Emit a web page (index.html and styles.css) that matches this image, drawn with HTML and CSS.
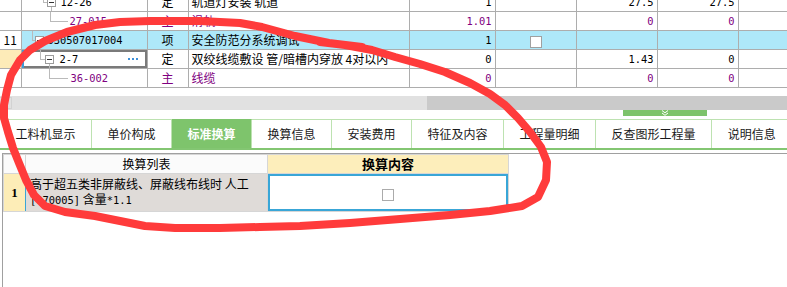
FILE: index.html
```html
<!DOCTYPE html>
<html lang="zh">
<head>
  <meta charset="UTF-8">
  <title>标准换算</title>
  <link rel="stylesheet" href="styles.css">
</head>
<body>

  <div class="grid">
    <table class="main">
      <colgroup>
        <col class="w-no"><col class="w-code"><col class="w-type"><col class="w-name"><col class="w-qty"><col class="w-chk"><col class="w-n"><col class="w-n"><col class="w-n">
      </colgroup>
      <tbody>
        <tr>
          <td class="no"></td>
          <td class="code"><div class="tree"><span class="sp sp21"></span><span class="elbow el4"></span><span class="node down"><i class="box"></i></span><span class="mono tx5">12-26</span></div></td>
          <td class="type">定</td>
          <td class="name">轨道灯安装 轨道</td>
          <td class="num">1</td>
          <td></td>
          <td class="num">27.5</td>
          <td class="num">27.5</td>
          <td></td>
        </tr>
        <tr class="sub-item">
          <td class="no"></td>
          <td class="code"><div class="tree"><span class="sp sp28"></span><span class="elbow el18"></span><span class="mono tx2">27-015</span></div></td>
          <td class="type">主</td>
          <td class="name">滑轨</td>
          <td class="num">1.01</td>
          <td></td>
          <td class="num">0</td>
          <td class="num">0</td>
          <td></td>
        </tr>
        <tr class="picked">
          <td class="no">11</td>
          <td class="code"><div class="tree"><span class="sp sp10"></span><span class="elbow el3"></span><span class="node down"><i class="box"></i></span><span class="mono tx4">030507017004</span></div></td>
          <td class="type">项</td>
          <td class="name">安全防范分系统调试</td>
          <td class="num">1</td>
          <td class="center"><span class="chk"></span></td>
          <td></td>
          <td></td>
          <td></td>
        </tr>
        <tr>
          <td class="no current"></td>
          <td class="code focus"><div class="tree"><span class="sp sp18"></span><span class="elbow el5"></span><span class="node down"><i class="box"></i></span><span class="mono tx6">2-7</span>
            <svg class="more" width="10" height="3" viewBox="0 0 10 3"><rect x="0" y="0" width="2" height="2"/><rect x="4" y="0" width="2" height="2"/><rect x="8" y="0" width="2" height="2"/></svg></div></td>
          <td class="type">定</td>
          <td class="name">双绞线缆敷设 管/暗槽内穿放 4对以内</td>
          <td class="num">0</td>
          <td></td>
          <td class="num">1.43</td>
          <td class="num">0</td>
          <td></td>
        </tr>
        <tr class="sub-item">
          <td class="no"></td>
          <td class="code"><div class="tree"><span class="sp sp27"></span><span class="elbow el19"></span><span class="mono tx3">36-002</span></div></td>
          <td class="type">主</td>
          <td class="name">线缆</td>
          <td class="num">0</td>
          <td></td>
          <td class="num">0</td>
          <td class="num">0</td>
          <td></td>
        </tr>
      </tbody>
    </table>
  </div>

  <div class="hscroll"><span class="hs-btn"></span><span class="hs-thumb"></span></div>

  <div class="splitter">
    <span class="grip">
      <svg width="8" height="6" viewBox="0 0 8 6"><path d="M1 0.5 L4 2.8 L7 0.5 M1 3 L4 5.3 L7 3" fill="none" stroke="#fff" stroke-width="1"/></svg>
    </span>
  </div>

  <div class="tabs">
    <span class="tab">工料机显示</span>
    <span class="tab">单价构成</span>
    <span class="tab active">标准换算</span>
    <span class="tab">换算信息</span>
    <span class="tab">安装费用</span>
    <span class="tab">特征及内容</span>
    <span class="tab">工程量明细</span>
    <span class="tab">反查图形工程量</span>
    <span class="tab">说明信息</span>
  </div>

  <div class="panel">
    <table class="conv">
      <colgroup>
        <col class="c-no"><col class="c-list"><col class="c-val">
      </colgroup>
      <thead>
        <tr>
          <th class="hno"></th>
          <th class="hlist">换算列表</th>
          <th class="hval">换算内容</th>
        </tr>
      </thead>
      <tbody>
        <tr>
          <td class="rno">1</td>
          <td class="rlist">高于超五类非屏蔽线、屏蔽线布线时 人工<br><span class="mono">[070005]</span> 含量<span class="mono">*1.1</span></td>
          <td class="rval"><span class="chk light"></span></td>
        </tr>
      </tbody>
    </table>
  </div>

  <svg class="mark" width="787" height="287" viewBox="0 0 787 287">
    <path d="M362 47 L329 43 L295 36 L262 27 L240 23 L200 21 L150 21 L120 22 L95 25 L67 32 L45 41 L30 50 L20 60 L11 75 L7 90 L4 105 L4 118 L8 132 L13 148 L19 163 L26 180 L34 195 L45 206 L65 212 L95 216 L120 221 L145 226 L175 228 L220 228 L260 227 L300 226 L350 223 L400 219 L450 215 L490 211 L522 206 L538 197 L546 180 L547 162 L541 147 L530 132 L518 118 L505 105 L490 94 L470 83 L445 72 L420 64 L395 57 L372 50 L345 45 L320 42" fill="none" stroke="#ff3b3b" stroke-width="8" stroke-linecap="round" stroke-linejoin="round"/>
  </svg>

</body>
</html>
```

FILE: styles.css
```css
body {
  margin: 0;
  position: relative;
  width: 787px;
  height: 287px;
  overflow: hidden;
  font-family: "Noto Sans CJK SC", sans-serif;
  font-size: 12px;
  color: #000;
  background: #fff;
}

.mono {
  font-family: "DejaVu Sans Mono", monospace;
  font-size: 10.4px;
}

/* upper grid */
.grid {
  height: 88px;
  overflow: hidden;
}

table.main {
  margin-top: -8px;
  border-collapse: collapse;
  table-layout: fixed;
  width: 819px;
}

.w-no { width: 21px; }
.w-code { width: 126px; }
.w-type { width: 41px; }
.w-name { width: 221px; }
.w-qty { width: 86px; }
.w-chk { width: 81px; }
.w-n { width: 81px; }

table.main td {
  height: 18px;
  padding: 0;
  border: 1px solid #adadad;
  white-space: nowrap;
  overflow: hidden;
  line-height: 18px;
}

table.main td:first-child { border-left: none; }

.no { text-align: center; }
.no.current { background: #fdebb8; }

.type { text-align: center; }
.name { padding-left: 3px !important; }
.num {
  text-align: right;
  padding-right: 3px !important;
  font-family: "DejaVu Sans Mono", monospace;
  font-size: 10.4px;
}
.center { text-align: center; }

.sub-item td { color: #800080; }

.picked td { background: #aee8f9; }
.picked td.no { background: #fff; }

.focus {
  box-shadow: inset 2px 0 0 #3b9cd9, inset 0 0 0 2px #7a7a7a;
}

/* tree column */
.tree {
  display: flex;
  align-items: center;
  height: 18px;
}

.sp { flex-shrink: 0; }
.sp10 { width: 10px; }
.sp18 { width: 18px; }
.sp21 { width: 21px; }
.sp27 { width: 27px; }
.sp28 { width: 28px; }

.elbow {
  align-self: flex-start;
  height: 10px;
  box-sizing: border-box;
  border-left: 1px solid #bababa;
  border-bottom: 1px solid #bababa;
  flex-shrink: 0;
}
.el3 { width: 3px; }
.el4 { width: 4px; }
.el5 { width: 5px; }
.el18 { width: 18px; }
.el19 { width: 19px; }

.node {
  align-self: stretch;
  width: 9px;
  display: flex;
  flex-direction: column;
  align-items: center;
  flex-shrink: 0;
}
.node::before,
.node::after {
  content: "";
  flex: 1;
  width: 0;
}
.node.down::after { border-left: 1px solid #bababa; }

.box {
  width: 9px;
  height: 9px;
  box-sizing: border-box;
  border: 1px solid #9c9c9c;
  background: #fff;
  display: flex;
  align-items: center;
  justify-content: center;
}
.box::before {
  content: "";
  width: 5px;
  height: 1px;
  background: #333;
}

.tx2 { margin-left: 2px; }
.tx3 { margin-left: 3px; }
.tx4 { margin-left: 4px; }
.tx5 { margin-left: 5px; }
.tx6 { margin-left: 6px; }

.more {
  margin-left: auto;
  margin-right: 9px;
  fill: #3d8fd8;
}

.chk {
  display: inline-block;
  width: 12px;
  height: 12px;
  box-sizing: border-box;
  border: 1px solid #a0a0a0;
  background: #fff;
  vertical-align: middle;
}
.chk.light { border-color: #ababab; }

/* scroll + splitter */
.hscroll {
  margin-top: 8px;
  height: 14px;
  background: #e1e1e1;
  display: flex;
}

.hs-btn {
  width: 12px;
  margin: 1px 0;
  box-sizing: border-box;
  border: 1px solid #d2d2d2;
  border-left: none;
}

.hs-thumb {
  margin-left: auto;
  width: 360px;
  background: #cacaca;
}

.splitter { height: 6px; }

.grip {
  display: flex;
  margin-left: 623px;
  width: 84px;
  height: 6px;
  background: #7dc36b;
  justify-content: center;
  align-items: center;
}

/* tabs */
.tabs {
  margin-top: 3px;
  display: flex;
  border-bottom: 2px solid #83c672;
}

.tab {
  flex-shrink: 0;
  padding: 0 15.5px;
  height: 28px;
  line-height: 28px;
  border-top: 1px solid #bde2b1;
  border-right: 1px solid #bde2b1;
  white-space: nowrap;
  color: #1a1a1a;
}

.tab.active {
  background: #7ec46c;
  border-top-color: #7ec46c;
  color: #fff;
  font-weight: bold;
}

/* lower panel */
.panel {
  margin-top: 3px;
  margin-left: 2px;
  height: 133px;
  border-top: 1px solid #a0a0a0;
  border-left: 1px solid #a0a0a0;
}

table.conv {
  border-collapse: collapse;
  table-layout: fixed;
  width: 505px;
}

.c-no { width: 22px; }
.c-list { width: 242px; }
.c-val { width: 241px; }

table.conv th,
table.conv td {
  padding: 0;
  border: 1px solid #d6d6d6;
}

table.conv th {
  height: 18px;
  line-height: 18px;
  font-weight: normal;
  background: #fbfbfb;
}

table.conv th.hval {
  background: #fdeebb;
  font-weight: bold;
  font-size: 13px;
}

table.conv td { height: 35px; }

.rno {
  background: #fdedb7;
  text-align: center;
  font-family: "Liberation Serif", serif;
  font-weight: bold;
  font-size: 13px;
  border-right: 1px solid #3aa5d6 !important;
}

.rlist {
  background: #dfdbd8;
  vertical-align: top;
  padding: 2px 0 0 4px !important;
  line-height: 15px;
  white-space: nowrap;
}

.rval {
  text-align: center;
  box-shadow: inset 0 0 0 2px #39a6d7;
}

.mark {
  position: absolute;
  left: 0;
  top: 0;
  pointer-events: none;
}
```
